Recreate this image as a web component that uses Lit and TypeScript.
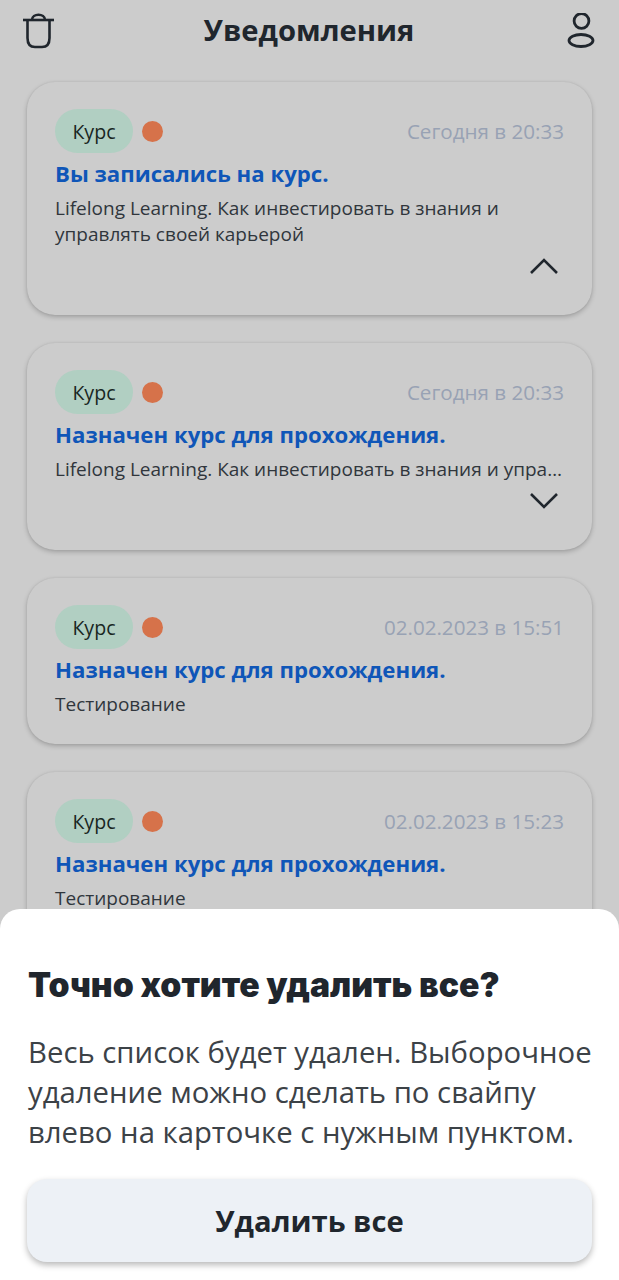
import { LitElement, html, css, svg } from "lit";
import { customElement } from "lit/decorators.js";
import { classMap } from "lit/directives/class-map.js";

type Item = { time: string; title: string; text: string; chevron?: "up" | "down"; clamp?: boolean };

const items: Item[] = [
  { time: "Сегодня в 20:33", title: "Вы записались на курс.", text: "Lifelong Learning. Как инвестировать в знания и управлять своей карьерой", chevron: "up" },
  { time: "Сегодня в 20:33", title: "Назначен курс для прохождения.", text: "Lifelong Learning. Как инвестировать в знания и управлять своей карьерой", chevron: "down", clamp: true },
  { time: "02.02.2023 в 15:51", title: "Назначен курс для прохождения.", text: "Тестирование" },
  { time: "02.02.2023 в 15:23", title: "Назначен курс для прохождения.", text: "Тестирование" },
];

@customElement("app-root")
export class AppRoot extends LitElement {
  static styles = css`
    :host {
      display: block;
      position: relative;
      width: 619px;
      height: 1280px;
      overflow: hidden;
      background: #cccccc;
      font-family: "Open Sans", "Noto Sans", sans-serif;
      color: #20262d;
    }
    .header {
      height: 62px;
      padding: 0 24px 0 23px;
      display: flex;
      align-items: center;
      justify-content: space-between;
    }
    .header h1 {
      margin: 0 3px 0 0;
      padding-bottom: 2px;
      font-size: 29.2px;
      line-height: 38px;
      font-weight: 700;
      color: #20262d;
    }
    .header svg { display: block; }
    .list {
      display: flex;
      flex-direction: column;
      gap: 28px;
      padding: 20px 27px 0;
    }
    .card {
      border-radius: 28px;
      background: #cccccc;
      box-shadow: 0 2px 5px rgba(0, 0, 0, 0.22), 0 0 2px rgba(0, 0, 0, 0.08);
      padding: 27px 28px 27px;
    }
    .top {
      display: flex;
      align-items: center;
      height: 44px;
    }
    .tag {
      height: 44px;
      width: 78px;
      border-radius: 22px;
      background: #b1cfc2;
      display: flex;
      align-items: center;
      justify-content: center;
      font-size: 19.6px;
      color: #18261f;
    }
    .dot {
      width: 21px;
      height: 21px;
      border-radius: 50%;
      background: #d6724a;
      margin-left: 9px;
    }
    .time {
      margin-left: auto;
      font-size: 20.6px;
      color: #98a2b4;
    }
    .title {
      margin-top: 6px;
      font-size: 22.2px;
      line-height: 30px;
      font-weight: 700;
      color: #0f56b8;
    }
    .text {
      margin-top: 6px;
      font-size: 19px;
      line-height: 26px;
      color: #30363c;
    }
    .clamp {
      white-space: nowrap;
      overflow: hidden;
      text-overflow: ellipsis;
    }
    .chev {
      display: flex;
      justify-content: flex-end;
      margin-top: 9px;
      margin-bottom: 12px;
      padding-right: 5px;
    }
    .chev svg { display: block; }
    .sheet {
      position: absolute;
      left: 0;
      right: 0;
      top: 909px;
      bottom: 0;
      background: #ffffff;
      border-radius: 20px 20px 0 0;
      padding: 53px 27px 0 28px;
    }
    .sheet h2 {
      margin: 0;
      font-family: Inter, "Noto Sans", sans-serif;
      font-size: 33.7px;
      line-height: 46px;
      font-weight: 900;
      color: #20262d;
      white-space: nowrap;
    }
    .sheet p {
      margin: 24px 0 0;
      font-size: 29.3px;
      line-height: 40px;
      color: #3c4247;
    }
    .btn {
      margin-top: 27px;
      margin-left: -1px;
      height: 83px;
      border-radius: 20px;
      background: #edf1f6;
      box-shadow: 0 3px 6px rgba(0, 0, 0, 0.28);
      display: flex;
      align-items: center;
      justify-content: center;
      font-size: 29.2px;
      font-weight: 700;
      color: #20262d;
    }
  `;

  private chevron(dir: "up" | "down") {
    const d = dir === "up" ? "M2 17 L15 4 L28 17" : "M2 3 L15 16 L28 3";
    return html`<svg width="30" height="20" viewBox="0 0 30 20" fill="none">
      ${svg`<path d=${d} stroke="#20262d" stroke-width="2.6" />`}
    </svg>`;
  }

  render() {
    return html`
      <div class="header">
        <svg width="31" height="36" viewBox="0 0 31 36" fill="none" stroke="#20262d" stroke-width="2.6">
          <path d="M0 7 H31" />
          <path d="M9 7 C9 0 22 0 22 7" />
          <path d="M4.5 7 V25 C4.5 32 8 34 12 34 H19 C23 34 26.5 32 26.5 25 V7" />
        </svg>
        <h1>Уведомления</h1>
        <svg width="28" height="36" viewBox="0 0 28 36" fill="none" stroke="#20262d" stroke-width="2.8">
          <circle cx="14.5" cy="8" r="7.4" />
          <ellipse cx="14" cy="27.5" rx="12" ry="6" />
        </svg>
      </div>
      <div class="list">
        ${items.map(
          (i) => html`
            <div class="card">
              <div class="top">
                <div class="tag">Курс</div>
                <div class="dot"></div>
                <div class="time">${i.time}</div>
              </div>
              <div class="title">${i.title}</div>
              <div class=${classMap({ text: true, clamp: !!i.clamp })}>${i.text}</div>
              ${i.chevron ? html`<div class="chev">${this.chevron(i.chevron)}</div>` : ""}
            </div>
          `
        )}
      </div>
      <div class="sheet">
        <h2>Точно хотите удалить все?</h2>
        <p>Весь список будет удален. Выборочное удаление можно сделать по свайпу влево на карточке с нужным пунктом.</p>
        <div class="btn">Удалить все</div>
      </div>
    `;
  }
}
